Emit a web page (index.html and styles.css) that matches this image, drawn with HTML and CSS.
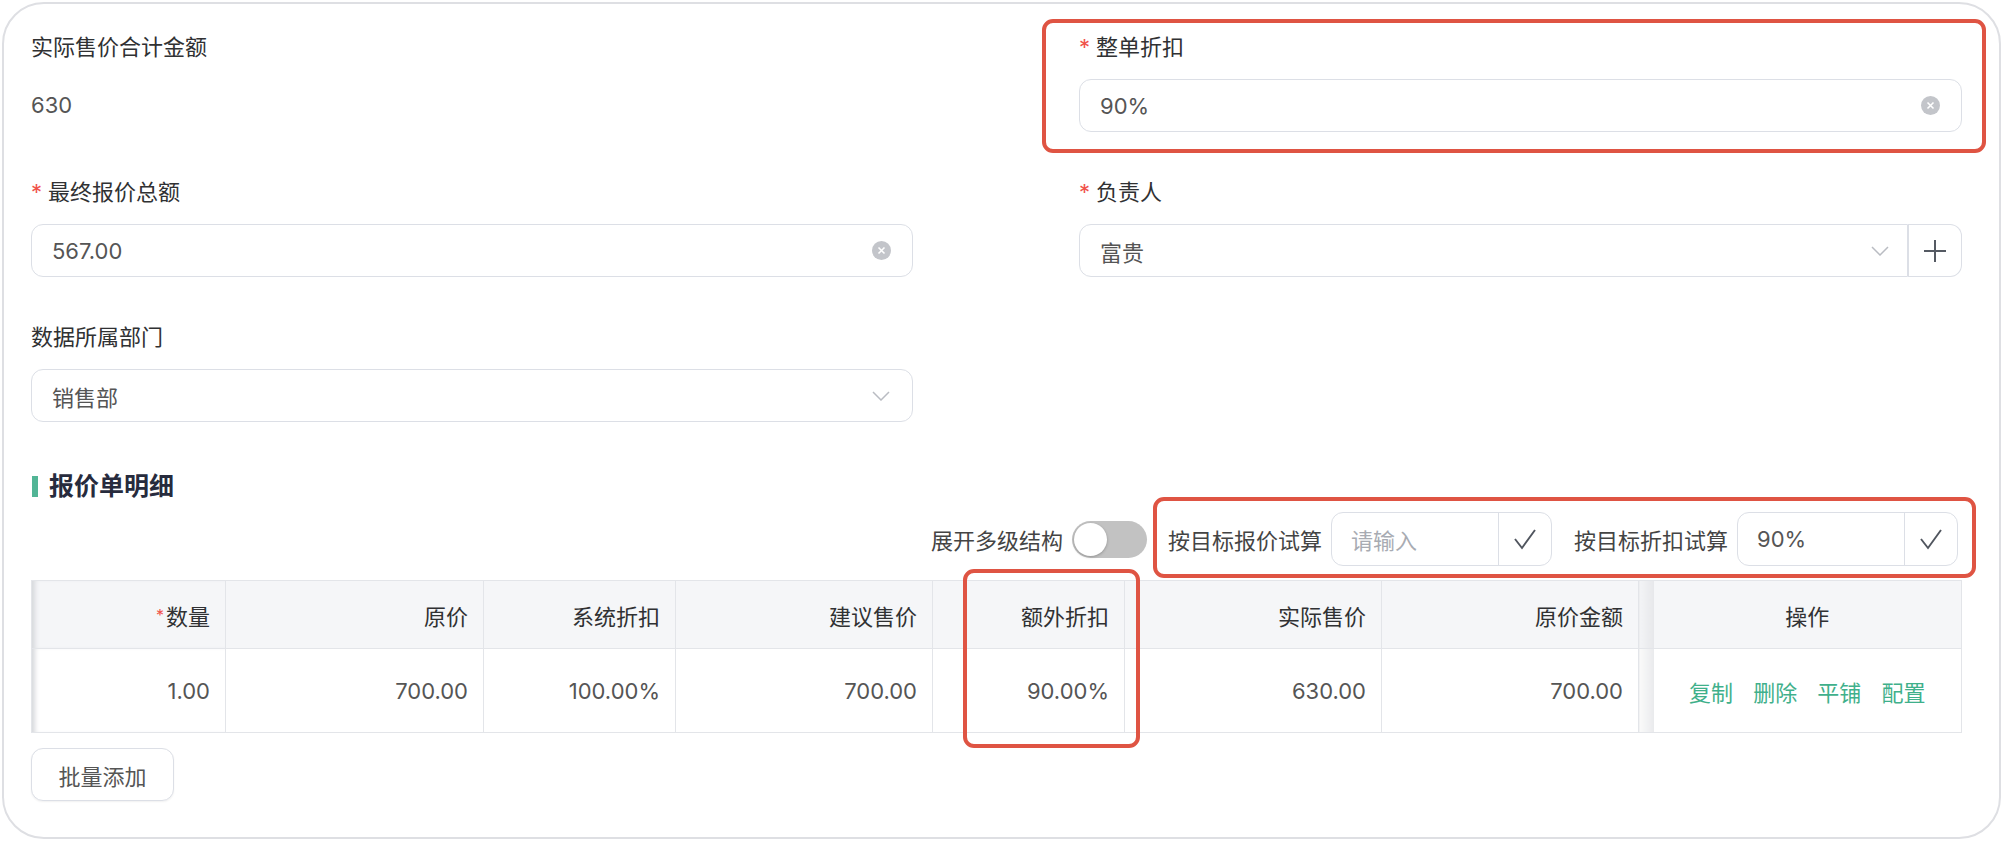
FILE: index.html
```html
<!DOCTYPE html>
<html lang="zh-CN">
<head>
    <meta charset="UTF-8">
    <meta name="viewport" content="width=device-width, initial-scale=1.0">
    <title>报价单</title>
    <link rel="stylesheet" href="styles.css">
</head>
<body>
    <div class="card">
        <div class="form">
            <div class="item">
                <div class="label">实际售价合计金额</div>
                <div class="value">630</div>
            </div>
            <div class="item marked mark-top">
                <div class="label"><span class="req">*</span>整单折扣</div>
                <div class="input">
                    <span>90%</span>
                    <svg class="clear" width="19" height="19" viewBox="0 0 19 19"><circle cx="9.5" cy="9.5" r="9.5" fill="#c3c5ca"/><path d="M6.5 6.5 L12.5 12.5 M12.5 6.5 L6.5 12.5" stroke="#fff" stroke-width="1.6"/></svg>
                </div>
            </div>
            <div class="item">
                <div class="label"><span class="req">*</span>最终报价总额</div>
                <div class="input">
                    <span>567.00</span>
                    <svg class="clear" width="19" height="19" viewBox="0 0 19 19"><circle cx="9.5" cy="9.5" r="9.5" fill="#c3c5ca"/><path d="M6.5 6.5 L12.5 12.5 M12.5 6.5 L6.5 12.5" stroke="#fff" stroke-width="1.6"/></svg>
                </div>
            </div>
            <div class="item">
                <div class="label"><span class="req">*</span>负责人</div>
                <div class="select-group">
                    <div class="input select">
                        <span>富贵</span>
                        <svg class="arrow" width="18" height="10" viewBox="0 0 18 10"><path d="M1 1 L9 9 L17 1" fill="none" stroke="#b9bcc2" stroke-width="1.5"/></svg>
                    </div>
                    <div class="plus-btn">
                        <svg width="24" height="24" viewBox="0 0 24 24"><path d="M12 1 V23 M1 12 H23" stroke="#555a63" stroke-width="2"/></svg>
                    </div>
                </div>
            </div>
            <div class="item">
                <div class="label">数据所属部门</div>
                <div class="input">
                    <span>销售部</span>
                    <svg class="arrow" width="18" height="10" viewBox="0 0 18 10"><path d="M1 1 L9 9 L17 1" fill="none" stroke="#b9bcc2" stroke-width="1.5"/></svg>
                </div>
            </div>
        </div>

        <h3 class="section-title">报价单明细</h3>

        <div class="toolbar">
            <span class="tool-label">展开多级结构</span>
            <span class="switch"><span class="knob"></span></span>
            <div class="trial marked mark-trial">
                <span class="tool-label">按目标报价试算</span>
                <div class="trial-input">
                    <span class="trial-field placeholder">请输入</span>
                    <span class="trial-check"><svg width="24" height="22" viewBox="0 0 24 22"><path d="M2 11 L9 20 L22 2" fill="none" stroke="#50555e" stroke-width="1.9"/></svg></span>
                </div>
                <span class="tool-label second">按目标折扣试算</span>
                <div class="trial-input">
                    <span class="trial-field">90%</span>
                    <span class="trial-check"><svg width="24" height="22" viewBox="0 0 24 22"><path d="M2 11 L9 20 L22 2" fill="none" stroke="#50555e" stroke-width="1.9"/></svg></span>
                </div>
            </div>
        </div>

        <div class="table-wrap">
            <table>
                <colgroup>
                    <col style="width:194px">
                    <col style="width:258px">
                    <col style="width:192px">
                    <col style="width:257px">
                    <col style="width:192px">
                    <col style="width:257px">
                    <col style="width:257px">
                    <col style="width:15px">
                    <col>
                </colgroup>
                <tr class="head">
                    <th class="first"><span class="req">*</span>数量</th>
                    <th>原价</th>
                    <th>系统折扣</th>
                    <th>建议售价</th>
                    <th>额外折扣</th>
                    <th>实际售价</th>
                    <th>原价金额</th>
                    <th class="hidden-col"></th>
                    <th class="ops">操作</th>
                </tr>
                <tr>
                    <td class="first">1.00</td>
                    <td>700.00</td>
                    <td>100.00%</td>
                    <td>700.00</td>
                    <td>90.00%</td>
                    <td>630.00</td>
                    <td>700.00</td>
                    <td class="hidden-col"></td>
                    <td class="ops">
                        <a href="#">复制</a>
                        <a href="#">删除</a>
                        <a href="#">平铺</a>
                        <a href="#">配置</a>
                    </td>
                </tr>
            </table>
            <div class="col-mark"></div>
        </div>

        <button class="btn">批量添加</button>
    </div>
</body>
</html>
```

FILE: styles.css
```css
body{
    margin: 0;
    font-family: Inter, "Noto Sans CJK SC", sans-serif;
    font-size: 22px;
    color: #303133;
    background-color: #fff;
}
.card{
    box-sizing: border-box;
    width: 1999px;
    height: 837px;
    margin: 2px 0 0 2px;
    border: 2px solid #dedfe3;
    border-radius: 42px;
    padding: 28px 37px 0 27px;
}
.form{
    display: grid;
    grid-template-columns: 882px 883px;
    column-gap: 166px;
    row-gap: 45px;
}
.label{
    height: 30px;
    line-height: 30px;
    margin-bottom: 17px;
    color: #303133;
}
.req{
    color: #f0524a;
    margin-right: 6px;
}
.value{
    height: 53px;
    line-height: 53px;
    color: #555;
}
.input{
    box-sizing: border-box;
    display: flex;
    align-items: center;
    justify-content: space-between;
    height: 53px;
    border: 1px solid #dcdfe6;
    border-radius: 12px;
    padding: 0 22px 0 20px;
    color: #555;
}
.input .clear{
    margin-right: -1px;
}
.select-group{
    display: flex;
}
.select{
    flex: 1;
    border-radius: 12px 0 0 12px;
    padding-right: 18px;
}
.plus-btn{
    box-sizing: border-box;
    width: 54px;
    height: 53px;
    display: flex;
    align-items: center;
    justify-content: center;
    border: 1px solid #dcdfe6;
    border-left: 0;
    border-radius: 0 12px 12px 0;
    box-shadow: inset 1px 0 0 #dcdfe6;
}
.marked{
    position: relative;
}
.marked::after{
    content: "";
    position: absolute;
    border: 4px solid #df5443;
    border-radius: 11px;
    pointer-events: none;
}
.mark-top::after{
    top: -13px;
    left: -37px;
    right: -24px;
    bottom: -21px;
}
.section-title{
    margin: 49px 0 0 0;
    height: 30px;
    line-height: 30px;
    font-size: 25px;
    font-weight: bold;
    color: #272b3d;
    display: flex;
    align-items: center;
}
.section-title::before{
    content: "";
    width: 6px;
    height: 21px;
    background-color: #52b596;
    margin: 0 11px 0 1px;
}
.toolbar{
    margin-top: 11px;
    height: 54px;
    display: flex;
    align-items: center;
    justify-content: flex-end;
    padding-right: 4px;
}
.tool-label{
    color: #444;
    white-space: nowrap;
}
.switch{
    box-sizing: border-box;
    width: 75px;
    height: 37px;
    border-radius: 19px;
    background-color: #c2c2c2;
    padding: 2px;
    margin: 0 21px 0 9px;
    display: flex;
}
.knob{
    width: 33px;
    height: 33px;
    border-radius: 50%;
    background-color: #fff;
    box-shadow: 0 1px 3px rgba(0,0,0,0.25);
}
.trial{
    display: flex;
    align-items: center;
}
.mark-trial::after{
    top: -15px;
    left: -15px;
    right: -18px;
    bottom: -12px;
}
.tool-label.second{
    margin-left: 22px;
}
.trial-input{
    box-sizing: border-box;
    width: 221px;
    height: 54px;
    margin-left: 9px;
    border: 1px solid #dcdfe6;
    border-radius: 12px;
    display: flex;
}
.trial-field{
    flex: 1;
    display: flex;
    align-items: center;
    padding-left: 19px;
    color: #555;
}
.trial-field.placeholder{
    color: #a8abb2;
}
.trial-check{
    width: 52px;
    border-left: 1px solid #dcdfe6;
    display: flex;
    align-items: center;
    justify-content: center;
}
.table-wrap{
    position: relative;
    margin-top: 14px;
}
table{
    width: 1931px;
    table-layout: fixed;
    border-collapse: collapse;
}
th, td{
    border: 1px solid #e3e5e9;
    text-align: right;
    padding: 0 15px;
    white-space: nowrap;
}
th{
    height: 67px;
    background-color: #f5f6f8;
    font-weight: normal;
    color: #303133;
}
td{
    height: 83px;
    color: #555;
}
th .req{
    font-size: 16px;
    margin-right: 2px;
    vertical-align: 4px;
}
.first{
    box-shadow: inset 6px 0 5px -3px #d6d8dc;
}
.hidden-col{
    padding: 0;
    border-right: 0;
    background: linear-gradient(to right, #fafafa, #e9eaec);
}
th.hidden-col{
    background: linear-gradient(to right, #f3f4f6, #e6e7ea);
}
.ops{
    text-align: center;
    border-left: 0;
}
.ops a{
    color: #3fb08b;
    text-decoration: none;
    margin: 0 7px;
}
.col-mark{
    position: absolute;
    left: 932px;
    top: -11px;
    width: 177px;
    height: 179px;
    box-sizing: border-box;
    border: 4px solid #df5443;
    border-radius: 11px;
}
.btn{
    margin-top: 15px;
    width: 143px;
    height: 53px;
    border: 1px solid #dcdfe6;
    border-radius: 12px;
    background-color: #fff;
    font-family: Inter, "Noto Sans CJK SC", sans-serif;
    font-size: 22px;
    color: #555;
    box-shadow: 0 1px 2px rgba(0,0,0,0.06);
}
```
